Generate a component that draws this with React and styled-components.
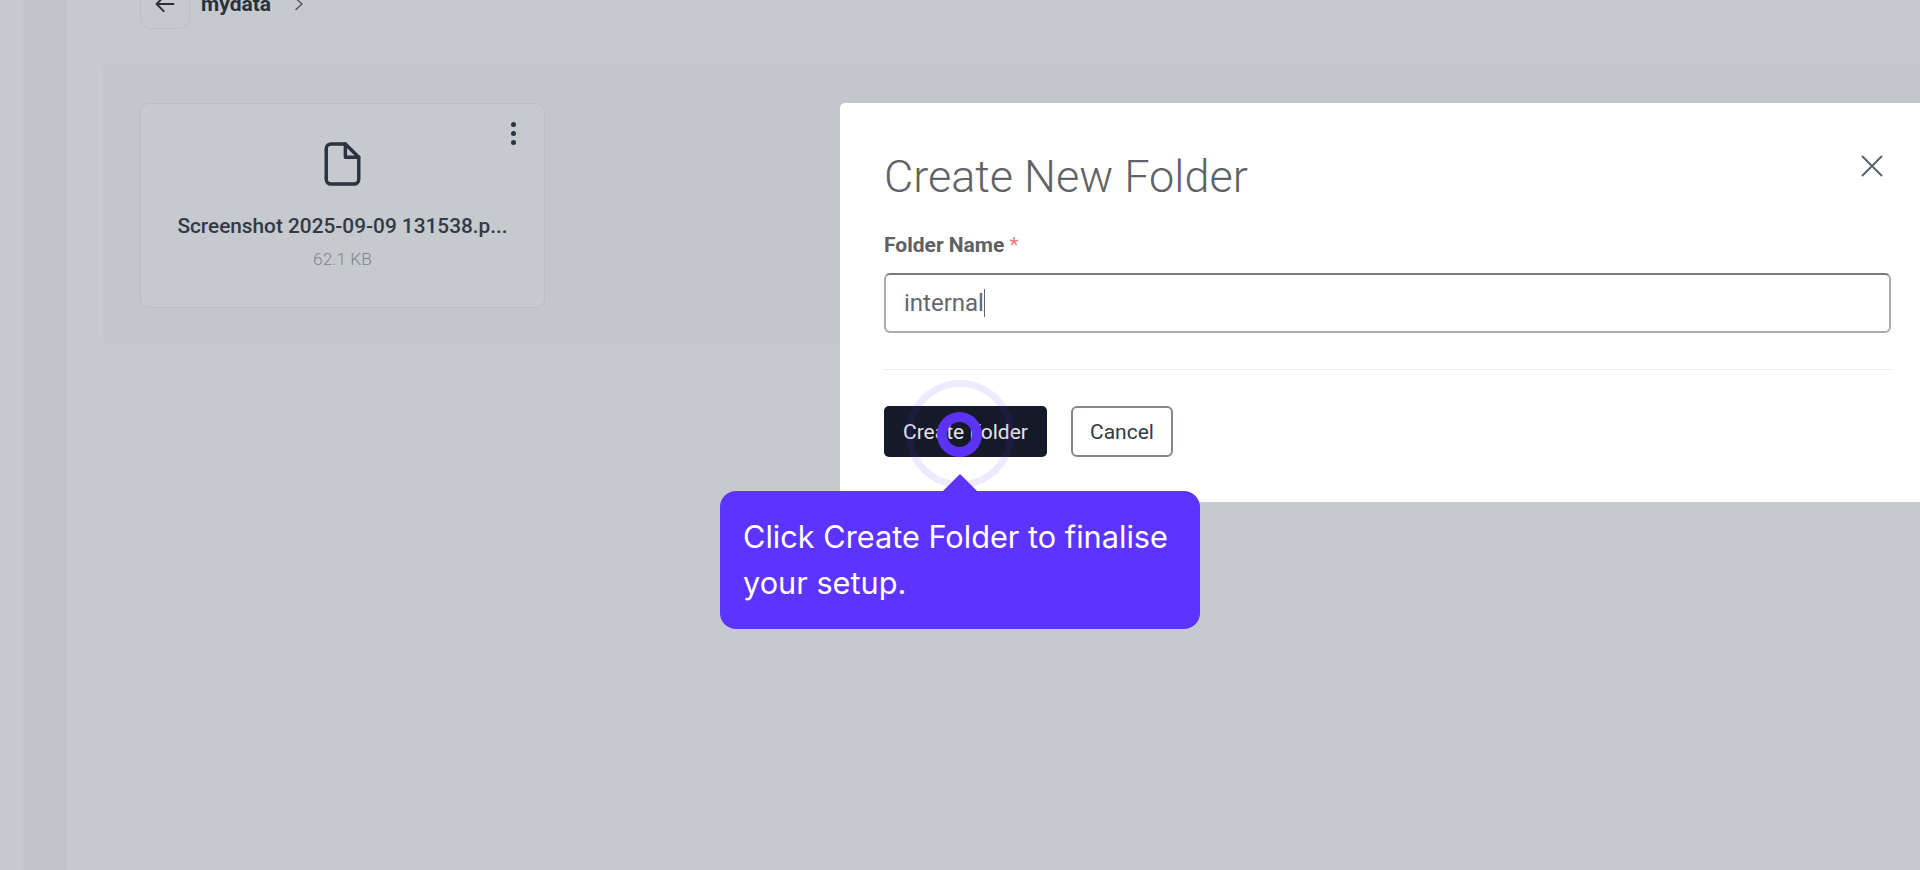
import React from 'react';
import styled, { createGlobalStyle } from 'styled-components';

const GlobalStyle = createGlobalStyle`
  html, body {
    margin: 0;
    height: 100%;
    overflow: hidden;
    background: #c6cacf;
    font-family: Roboto, "Liberation Sans", sans-serif;
  }
  #root { height: 100%; }
`;

const App = () => {
  return (
    <Page>
      <GlobalStyle />
      <RailEdge />
      <Rail />
      <Main>
        <Header>
          <BackButton>
            <svg width="26" height="26" viewBox="0 0 20 20" fill="none" stroke="#2b303b" strokeWidth="1.5" strokeLinecap="round" strokeLinejoin="round">
              <path d="M16.5 10H3.5M9 4.5 3.5 10 9 15.5" />
            </svg>
          </BackButton>
          <Crumb>mydata</Crumb>
          <Chevron width="12" height="14" viewBox="0 0 12 14" fill="none" stroke="#4a4f59" strokeWidth="1.3" strokeLinecap="round" strokeLinejoin="round">
            <path d="M3 1.5 9 7 3 12.5" />
          </Chevron>
        </Header>
        <FilesPanel>
          <FileCard>
            <MenuDots>
              <i />
              <i />
              <i />
            </MenuDots>
            <svg width="37" height="44" viewBox="0 0 38 46" fill="none" stroke="#2b3240" strokeWidth="3.6" strokeLinejoin="round" strokeLinecap="round">
              <path d="M7 2h15l14 14v23a5 5 0 0 1-5 5H7a5 5 0 0 1-5-5V7a5 5 0 0 1 5-5Z" />
              <path d="M22 2v14h14" />
            </svg>
            <FileName>Screenshot 2025-09-09 131538.p...</FileName>
            <FileSize>62.1 KB</FileSize>
          </FileCard>
        </FilesPanel>
      </Main>

      <Modal>
        <ModalTop>
          <ModalTitle>Create New Folder</ModalTitle>
          <CloseIcon width="22" height="22" viewBox="0 0 22 22" fill="none" stroke="#5b6069" strokeWidth="2" strokeLinecap="round">
            <path d="M1.5 1.5l19 19M20.5 1.5l-19 19" />
          </CloseIcon>
        </ModalTop>
        <FieldLabel>
          Folder Name <Required>*</Required>
        </FieldLabel>
        <NameField>
          internal
          <Caret />
        </NameField>
        <Divider />
        <Actions>
          <PrimaryButton>Create Folder</PrimaryButton>
          <GhostButton>Cancel</GhostButton>
        </Actions>
      </Modal>

      <Halo />
      <Dot />
      <Tooltip>Click Create Folder to finalise your setup.</Tooltip>
    </Page>
  );
};

export default App;

const Page = styled.div`
  position: relative;
  display: flex;
  width: 1920px;
  height: 870px;
  overflow: hidden;
  background: #c6cacf;
`;

const RailEdge = styled.div`
  width: 23px;
  flex: none;
  background: #c6cacf;
`;

const Rail = styled.div`
  width: 44px;
  flex: none;
  background: #c2c5ca;
`;

const Main = styled.div`
  flex: 1;
  display: flex;
  flex-direction: column;
  padding-left: 36px;
`;

const Header = styled.div`
  display: flex;
  align-items: flex-start;
  box-sizing: border-box;
  height: 65px;
  padding-left: 37px;
  border-bottom: 1px solid #c0c3c8;
`;

const BackButton = styled.div`
  box-sizing: border-box;
  width: 50px;
  height: 50px;
  margin-top: -21px;
  display: flex;
  align-items: center;
  justify-content: center;
  border: 1px solid #babec3;
  border-radius: 11px;
`;

const Crumb = styled.span`
  margin-left: 11px;
  margin-top: -8px;
  font-size: 21px;
  font-weight: 700;
  line-height: 24px;
  color: #2b303b;
`;

const Chevron = styled.svg`
  margin-left: 22px;
  margin-top: -3px;
`;

const FilesPanel = styled.div`
  height: 278px;
  box-sizing: border-box;
  padding: 38px 37px;
  background: #c3c6cb;
`;

const FileCard = styled.div`
  position: relative;
  box-sizing: border-box;
  width: 405px;
  height: 205px;
  padding-top: 38px;
  display: flex;
  flex-direction: column;
  align-items: center;
  background: #c6cacf;
  border: 1px solid #babec3;
  border-radius: 9px;
`;

const MenuDots = styled.div`
  position: absolute;
  top: 18px;
  right: 28px;
  display: flex;
  flex-direction: column;
  gap: 4px;
  i {
    width: 5px;
    height: 5px;
    border-radius: 50%;
    background: #2b3240;
  }
`;

const FileName = styled.div`
  margin-top: 28px;
  font-size: 20.8px;
  font-weight: 500;
  line-height: 24px;
  color: #333945;
`;

const FileSize = styled.div`
  margin-top: 10px;
  font-size: 17.4px;
  font-weight: 300;
  line-height: 22px;
  color: #7f848c;
`;

const Modal = styled.div`
  position: absolute;
  top: 103px;
  left: 840px;
  right: 0;
  height: 399px;
  box-sizing: border-box;
  padding: 0 29px 0 44px;
  background: #fff;
  border-radius: 5px 0 0 5px;
`;

const ModalTop = styled.div`
  display: flex;
  justify-content: space-between;
  align-items: center;
  height: 134px;
`;

const ModalTitle = styled.h2`
  margin: 12px 0 0;
  font-size: 45px;
  font-weight: 300;
  color: #5f6266;
`;

const CloseIcon = styled.svg`
  margin-right: 8px;
  margin-top: -8px;
`;

const FieldLabel = styled.div`
  margin-top: -6px;
  font-size: 21px;
  font-weight: 700;
  line-height: 28px;
  color: #5e6063;
`;

const Required = styled.span`
  color: #ef7a72;
  font-weight: 400;
`;

const NameField = styled.div`
  display: flex;
  align-items: center;
  box-sizing: border-box;
  height: 60px;
  margin-top: 14px;
  padding-left: 18px;
  font-size: 24px;
  color: #63676c;
  border: 2px solid #a9acb0;
  border-top-color: #77797d;
  border-radius: 6px;
`;

const Caret = styled.span`
  width: 1px;
  height: 28px;
  background: #666;
`;

const Divider = styled.div`
  height: 1px;
  margin-top: 36px;
  background: #e9eaec;
`;

const Actions = styled.div`
  display: flex;
  gap: 24px;
  margin-top: 36px;
`;

const PrimaryButton = styled.div`
  display: flex;
  align-items: center;
  justify-content: center;
  width: 163px;
  height: 51px;
  font-size: 21px;
  color: #e4e4e7;
  background: #151a2a;
  border-radius: 5px;
`;

const GhostButton = styled.div`
  display: flex;
  align-items: center;
  justify-content: center;
  box-sizing: border-box;
  width: 102px;
  height: 51px;
  font-size: 21px;
  color: #343943;
  border: 2px solid #83878f;
  border-radius: 6px;
`;

const Halo = styled.div`
  position: absolute;
  left: 906px;
  top: 380px;
  box-sizing: border-box;
  width: 108px;
  height: 108px;
  border: 7px solid rgba(92, 51, 255, 0.1);
  border-radius: 50%;
`;

const Dot = styled.div`
  position: absolute;
  left: 937px;
  top: 412px;
  box-sizing: border-box;
  width: 45px;
  height: 45px;
  border: 10px solid #5c33f5;
  border-radius: 50%;
`;

const Tooltip = styled.div`
  position: absolute;
  left: 720px;
  top: 491px;
  box-sizing: border-box;
  width: 480px;
  height: 138px;
  padding: 23px 23px;
  font-family: Inter, "Liberation Sans", sans-serif;
  font-size: 30.7px;
  line-height: 46px;
  color: #fff;
  background: #5c33ff;
  border-radius: 16px;
  &::before {
    content: '';
    position: absolute;
    top: -17px;
    left: 223px;
    border-left: 17px solid transparent;
    border-right: 17px solid transparent;
    border-bottom: 17px solid #5c33ff;
  }
`;
